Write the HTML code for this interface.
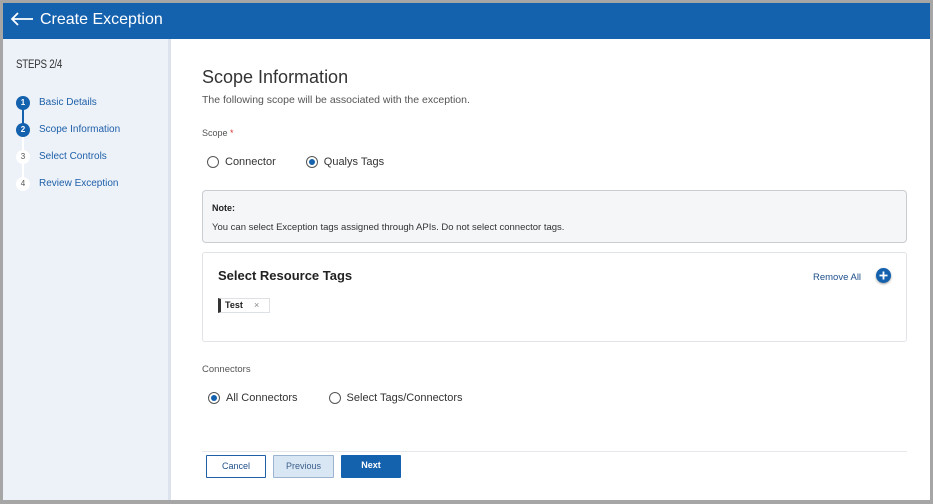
<!DOCTYPE html>
<html><head><meta charset="utf-8"><style>
*{box-sizing:border-box;margin:0;padding:0}
body{width:933px;height:504px;background:#a6a6a6;font-family:"Liberation Sans",sans-serif;position:relative;overflow:hidden}
.frame{position:absolute;left:3px;top:3px;width:927px;height:497px;background:#fff;overflow:hidden}
.hdr{position:absolute;left:0;top:0;width:927px;height:36px;background:#1461ae;color:#fff}
.hdr .t{position:absolute;left:37px;top:8px;font-size:16px}
.side{position:absolute;left:0;top:36px;width:168px;height:461px;background:#edf2f9;border-right:3px solid #dde3ec}
.steps{position:absolute;left:13px;top:20px;font-size:11.5px;color:#333;letter-spacing:-0.3px;transform:scaleX(.85);transform-origin:left}
.st{position:absolute;left:13px;font-size:10px;color:#1e5fa8}
.st .c{position:absolute;left:0;top:-1px;width:14px;height:14px;border-radius:50%;font-size:8px;text-align:center;line-height:14px;font-weight:bold}
.st .l{position:absolute;left:23px;top:0;white-space:nowrap}
.dot{background:#1461ae;color:#fff}
.wd{background:#fff;color:#555;font-weight:normal!important}
.ln{position:absolute;left:19px;width:2px}
.main{position:absolute;left:199px}
.radio{display:inline-block;width:12px;height:12px;border:1px solid #555;border-radius:50%;vertical-align:middle;position:relative;margin-right:6px}
.radio.on::after{content:"";position:absolute;left:2px;top:2px;width:6px;height:6px;border-radius:50%;background:#1461ae}
.rl{font-size:11px;color:#333;vertical-align:middle}
.btn{position:absolute;top:452px;height:23px;font-size:9px;text-align:center;line-height:21px;border-radius:1px}
</style></head><body><div class="frame">
<div class="hdr">
<svg style="position:absolute;left:7px;top:9px" width="24" height="14" viewBox="0 0 24 14"><path d="M23 7H2M8 1L2 7l6 6" stroke="#fff" stroke-width="1.8" fill="none"/></svg>
<div class="t">Create Exception</div></div>
<div class="side">
<div class="steps">STEPS 2/4</div>
<div class="ln" style="top:66px;height:20px;background:#1461ae"></div>
<div class="ln" style="top:93px;height:54px;background:#fff"></div>
<div class="st" style="top:58px"><div class="c dot">1</div><div class="l">Basic Details</div></div>
<div class="st" style="top:85px"><div class="c dot">2</div><div class="l">Scope Information</div></div>
<div class="st" style="top:112px"><div class="c wd">3</div><div class="l">Select Controls</div></div>
<div class="st" style="top:139px"><div class="c wd">4</div><div class="l">Review Exception</div></div>
</div>
<div class="main" style="top:64px;font-size:18px;color:#333">Scope Information</div>
<div class="main" style="top:91px;font-size:10.5px;color:#555">The following scope will be associated with the exception.</div>
<div class="main" style="top:125px;font-size:9px;color:#555">Scope <span style="color:#d33">*</span></div>
<div class="main" style="top:150px;left:204px"><span class="radio"></span><span class="rl">Connector</span><span style="display:inline-block;width:30px"></span><span class="radio on"></span><span class="rl">Qualys Tags</span></div>
<div style="position:absolute;left:199px;top:187px;width:705px;height:53px;background:#f5f6f8;border:1px solid #c9ccd1;border-radius:4px">
<div style="position:absolute;left:9px;top:12px;font-size:9px;font-weight:bold;color:#222">Note:</div>
<div style="position:absolute;left:9px;top:31px;font-size:9.5px;color:#333">You can select Exception tags assigned through APIs. Do not select connector tags.</div></div>
<div style="position:absolute;left:199px;top:249px;width:705px;height:90px;border:1px solid #e0e3e7;border-radius:3px">
<div style="position:absolute;left:15px;top:15px;font-size:13px;font-weight:bold;color:#222">Select Resource Tags</div>
<div style="position:absolute;left:610px;top:19px;font-size:9.5px;color:#1e4f8a">Remove All</div>
<div style="position:absolute;left:673px;top:15px;width:15px;height:15px;border-radius:50%;background:#1461ae;box-shadow:0 1px 2px rgba(0,0,0,.4)"><svg width="15" height="15"><path d="M7.5 3.5v8M3.5 7.5h8" stroke="#fff" stroke-width="1.8"/></svg></div>
<div style="position:absolute;left:15px;top:45px;width:52px;height:15px;border:1px solid #dde1e6;border-left:3px solid #333;font-size:9px;color:#222;padding-left:4px;line-height:13px;font-weight:bold">Test<span style="position:absolute;left:33px;color:#888;font-weight:normal">×</span></div>
</div>
<div class="main" style="top:361px;font-size:9.5px;color:#555">Connectors</div>
<div class="main" style="top:386px;left:205px"><span class="radio on"></span><span class="rl">All Connectors</span><span style="display:inline-block;width:31px"></span><span class="radio"></span><span class="rl">Select Tags/Connectors</span></div>
<div style="position:absolute;left:199px;top:448px;width:705px;height:1px;background:#e5e7ea"></div>
<div class="btn" style="left:203px;width:60px;border:1px solid #1e5fa8;color:#1e4f8a">Cancel</div>
<div class="btn" style="left:270px;width:61px;border:1px solid #9ab3d1;background:#d9e6f4;color:#3b5f8a">Previous</div>
<div class="btn" style="left:338px;width:60px;background:#1461ae;color:#fff;font-weight:bold">Next</div>
</div></body></html>
